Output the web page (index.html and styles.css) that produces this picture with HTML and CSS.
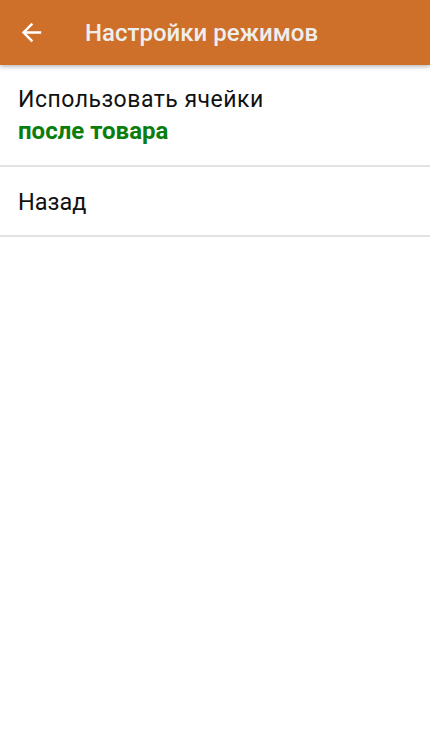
FILE: index.html
```html
<!DOCTYPE html>
<html lang="ru">
  <head>
    <meta charset="UTF-8" />
    <meta name="viewport" content="width=device-width, initial-scale=1.0" />
    <title>Настройки режимов</title>
    <link rel="stylesheet" href="styles.css">
  </head>
  <body>
    <header class="toolbar">
      <button class="back">
        <svg viewBox="0 0 24 24" width="29" height="29">
          <path d="M20 11H7.83l5.59-5.59L12 4l-8 8 8 8 1.41-1.41L7.83 13H20v-2z" fill="#ffffff" />
        </svg>
      </button>
      <h1 class="title">Настройки режимов</h1>
    </header>
    <main>
      <ul class="list">
        <li class="item">
          <p class="label">Использовать ячейки</p>
          <p class="value">после товара</p>
        </li>
        <li class="item item-single">
          <p class="label label-big">Назад</p>
        </li>
      </ul>
    </main>
  </body>
</html>
```

FILE: styles.css
```css
body {
  margin: 0;
  padding: 0;
  background: #ffffff;
  font-family: Roboto, "Liberation Sans", sans-serif;
}

.toolbar {
  display: flex;
  align-items: center;
  height: 65px;
  background: #cf702a;
  box-shadow: 0 2px 4px rgba(0, 0, 0, 0.25);
  position: relative;
  z-index: 1;
}

.back {
  display: flex;
  align-items: center;
  justify-content: center;
  border: none;
  background: none;
  padding: 0;
  margin-left: 17px;
  width: 29px;
  height: 29px;
}

.title {
  margin: 0 0 0 39px;
  color: #eeeeee;
  font-size: 24px;
  font-weight: 500;
  line-height: 28px;
}

.list {
  list-style: none;
  margin: 0;
  padding: 0;
}

.item {
  padding: 21px 18px 20px 18px;
  border-bottom: 2px solid #e2e2e2;
}

.item-single {
  padding-bottom: 19px;
}

.label {
  margin: 0;
  font-size: 23px;
  letter-spacing: 0.5px;
  line-height: 28px;
  color: #111111;
}

.label-big {
  font-size: 23.5px;
  letter-spacing: 0;
}

.value {
  margin: 3px 0 0 0;
  font-size: 24px;
  line-height: 28px;
  font-weight: 700;
  color: #0a7d0a;
}
```
